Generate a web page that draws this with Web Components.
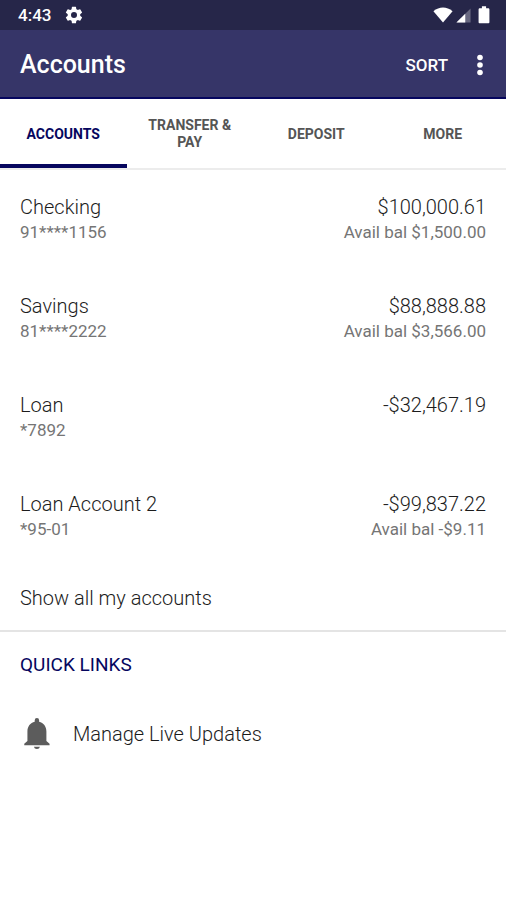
<!DOCTYPE html>
<html lang="en">
<head>
<meta charset="utf-8">
<meta name="viewport" content="width=device-width, initial-scale=1">
<title>Accounts</title>
<style>
  :root{--bar:#363568;--status:#262649;--navy:#06065e;--ink:#1c1c1c;--muted:#757575;--gutter:20px;}
  body{margin:0;background:#fff;color:var(--ink);font-family:Roboto,"Liberation Sans",sans-serif;}
</style>
</head>
<body>
<bank-status-bar time="4:43"></bank-status-bar>
<bank-app-bar>
  <span slot="title">Accounts</span>
</bank-app-bar>
<bank-tabs></bank-tabs>
<main>
  <bank-accounts></bank-accounts>
  <bank-quick-links>
    <span slot="heading">Quick Links</span>
  </bank-quick-links>
</main>

<script>
// Accounts screen — status bar, app bar, tabs, account list and quick links.
(function () {
  const IC = {
    gear:'<path fill-rule="evenodd" d="M19.4 13c0-.3.1-.6.1-1s0-.7-.1-1l2.1-1.6c.2-.2.3-.4.1-.7l-2-3.4c-.1-.2-.4-.3-.6-.2l-2.5 1a7.5 7.5 0 0 0-1.7-1L14.4 2.4a.5.5 0 0 0-.5-.4h-4a.5.5 0 0 0-.4.4l-.4 2.7c-.6.3-1.2.6-1.7 1l-2.5-1c-.2-.1-.5 0-.6.2l-2 3.4c-.1.3-.1.5.1.7L4.5 11c0 .3-.1.7-.1 1s0 .7.1 1l-2.1 1.6c-.2.2-.2.4-.1.7l2 3.4c.1.2.4.3.6.2l2.5-1c.5.4 1.1.7 1.7 1l.4 2.7c0 .2.2.4.4.4h4c.3 0 .5-.2.5-.4l.4-2.7c.6-.3 1.2-.6 1.7-1l2.5 1c.2.1.5 0 .6-.2l2-3.4c.1-.2.1-.5-.1-.7zM12 15.6a3.6 3.6 0 1 1 0-7.2 3.6 3.6 0 0 1 0 7.2z"/>',
    wifi:'<path d="M12 21L.5 7.500C4 4.500 8 3 12 3s8 1.500 11.500 4.500z"/>',
    signal:'<path opacity=".3" d="M2 22h20V2z"/><path d="M2 22h12.500V9.500z"/>',
    battery:'<path d="M9.500 1.500h5V4h2.500c.8 0 1.500.6 1.500 1.400v15.300c0 .7-.7 1.300-1.500 1.300H7c-.8 0-1.500-.6-1.500-1.300V5.400C5.500 4.600 6.200 4 7 4h2.500z"/>',
    more:'<circle cx="12" cy="4.500" r="2.800"/><circle cx="12" cy="12" r="2.800"/><circle cx="12" cy="19.500" r="2.800"/>',
    bell:'<path d="M12.300 23.300a2.200 2.200 0 0 0 2.200-1.700h-4.400a2.200 2.200 0 0 0 2.200 1.700zM19.200 17.500V10.500c0-3.500-2.100-6.300-5.300-7V2.300a1.600 1.600 0 0 0-3.200 0v1.200c-3.200.7-5.300 3.500-5.300 7v7l-2.300 2v1h18.400v-1z"/>',
  };
  const TABS = ['Accounts', 'Transfer & Pay', 'Deposit', 'More'];
  const ACCOUNTS = [
    { name:'Checking',       number:'91****1156', balance:'$100,000.61', avail:'Avail bal $1,500.00' },
    { name:'Savings',        number:'81****2222', balance:'$88,888.88',  avail:'Avail bal $3,566.00' },
    { name:'Loan',           number:'*7892',      balance:'-$32,467.19' },
    { name:'Loan Account 2', number:'*95-01',     balance:'-$99,837.22', avail:'Avail bal -$9.11' },
  ];
  const esc = (s) => String(s).replace(/&/g,'&amp;').replace(/</g,'&lt;').replace(/>/g,'&gt;');
  const svg = (icon, size) => `<svg width="${size}" height="${size}" viewBox="0 0 24 24" fill="currentColor" aria-hidden="true">${IC[icon]}</svg>`;
  const BASE = `
    :host{display:block;}
    *{box-sizing:border-box;}
    svg{display:block;flex:none;overflow:visible;}
    button{font:inherit;color:inherit;background:none;border:0;padding:0;margin:0;cursor:pointer;}
    a{color:inherit;text-decoration:none;}`;

  class StatusBar extends HTMLElement {
    connectedCallback() {
      const root = this.attachShadow({ mode:'open' });
      root.innerHTML = `
        <style>${BASE}
          :host{background:var(--status);color:#fff;}
          .bar{display:flex;align-items:center;height:30px;padding:0 12px 0 18px;}
          time{font-size:17px;font-weight:500;line-height:30px;margin-right:13px;}
          .system{display:flex;align-items:center;gap:2px;margin-left:auto;}
        </style>
        <div class="bar">
          <time>${esc(this.getAttribute('time'))}</time>
          ${svg('gear', 20)}
          <span class="system">${svg('wifi', 20)}${svg('signal', 17)}${svg('battery', 20)}</span>
        </div>`;
    }
  }

  class AppBar extends HTMLElement {
    connectedCallback() {
      const root = this.attachShadow({ mode:'open' });
      root.innerHTML = `
        <style>${BASE}
          :host{background:var(--bar);color:#fff;border-bottom:2px solid var(--navy);}
          header{display:flex;align-items:center;min-height:67px;padding:3px 14px 0 var(--gutter);}
          h1{flex:1;margin:0;font-size:25px;line-height:32px;font-weight:500;}
          .sort{font-size:17px;line-height:24px;font-weight:500;text-transform:uppercase;padding:12px 20px;}
        </style>
        <header>
          <h1><slot name="title"></slot></h1>
          <button class="sort" type="button">Sort</button>
          <button type="button" aria-label="More options">${svg('more', 24)}</button>
        </header>`;
    }
  }

  class Tabs extends HTMLElement {
    connectedCallback() {
      const root = this.attachShadow({ mode:'open' });
      root.innerHTML = `
        <style>${BASE}
          :host{border-bottom:2px solid #ececec;}
          nav{display:grid;grid-template-columns:repeat(4,1fr);min-height:69px;}
          button{padding:5px 14px 0;border-bottom:4px solid transparent;font-size:14px;line-height:17px;font-weight:700;text-transform:uppercase;color:#555;}
          button[aria-selected="true"]{color:var(--navy);border-color:var(--navy);}
        </style>
        <nav role="tablist">
          ${TABS.map((t, i) => `<button type="button" role="tab" aria-selected="${i === 0}">${esc(t)}</button>`).join('')}
        </nav>`;
      root.querySelector('nav').addEventListener('click', (e) => {
        const tab = e.target.closest('button');
        if (!tab) return;
        root.querySelectorAll('button').forEach((b) => b.setAttribute('aria-selected', b === tab));
      });
    }
  }

  const row = (a) => `
    <li><a href="#">
      <span class="name">${esc(a.name)}</span>
      <span class="name end">${esc(a.balance)}</span>
      <span class="sub">${esc(a.number)}</span>
      ${a.avail ? `<span class="sub end">${esc(a.avail)}</span>` : ''}
    </a></li>`;

  class Accounts extends HTMLElement {
    connectedCallback() {
      const root = this.attachShadow({ mode:'open' });
      root.innerHTML = `
        <style>${BASE}
          :host{border-bottom:2px solid #e4e4e4;font-weight:300;}
          ul{list-style:none;margin:0;padding:0;}
          li a{display:grid;grid-template-columns:1fr auto;padding:25px var(--gutter);}
          .name{font-size:20px;line-height:25px;}
          .sub{font-size:17px;line-height:24px;font-weight:400;color:var(--muted);}
          .end{text-align:right;}
          .all{display:block;width:100%;padding:20px var(--gutter);font-size:20px;line-height:24px;text-align:left;}
        </style>
        <ul>${ACCOUNTS.map(row).join('')}</ul>
        <button class="all" type="button">Show all my accounts</button>`;
    }
  }

  class QuickLinks extends HTMLElement {
    connectedCallback() {
      const root = this.attachShadow({ mode:'open' });
      root.innerHTML = `
        <style>${BASE}
          :host{padding-top:1px;}
          h2{margin:0;padding:20px var(--gutter);font-size:19px;line-height:24px;font-weight:400;text-transform:uppercase;color:var(--navy);}
          a{display:flex;align-items:center;gap:20px;padding:20px var(--gutter);font-size:20px;line-height:24px;font-weight:300;}
          svg{color:#5c5c5c;}
        </style>
        <h2><slot name="heading"></slot></h2>
        <a href="#">${svg('bell', 33)}<span>Manage Live Updates</span></a>`;
    }
  }

  customElements.define('bank-status-bar', StatusBar);
  customElements.define('bank-app-bar', AppBar);
  customElements.define('bank-tabs', Tabs);
  customElements.define('bank-accounts', Accounts);
  customElements.define('bank-quick-links', QuickLinks);
})();
</script>
</body>
</html>
